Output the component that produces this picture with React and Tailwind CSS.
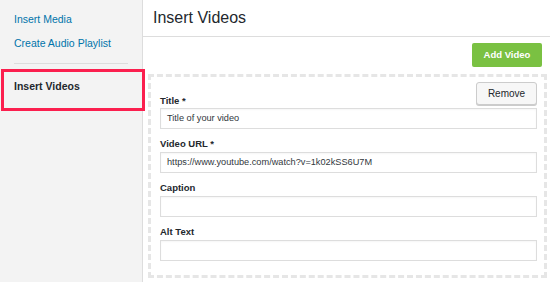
import React from 'react';

const font = { fontFamily: '"Liberation Sans", Arial, sans-serif' };

const Field = ({ label, value, first }) => (
  <div>
    {!first && (
      <label className="block mt-[8px] text-[9.5px] leading-[14px] font-bold text-[#23282d]">
        {label}
      </label>
    )}
    <div
      className={`${first ? '' : 'mt-[1px]'} h-[21px] border border-[#dddddd] bg-white shadow-[inset_0_1px_2px_rgba(0,0,0,0.04)] px-[6px] flex items-center text-[9.2px] text-[#32373c]`}
    >
      {value}
    </div>
  </div>
);

export default function App() {
  return (
    <div className="relative flex w-[550px] h-[282px] overflow-hidden bg-white" style={font}>
      {/* sidebar */}
      <aside className="w-[143px] shrink-0 bg-[#f3f3f3] border-r border-[#dddddd] pt-[9px] px-[14px]">
        <a className="block text-[10.5px] leading-[20px] text-[#0073aa]">Insert Media</a>
        <a className="block mt-[4px] text-[10.5px] leading-[20px] text-[#0073aa]">Create Audio Playlist</a>
        <div className="mt-[10px] border-t border-[#dddddd] w-[114px]" />
        <div className="mt-[12px] text-[10.5px] leading-[20px] font-bold text-[#23282d]">Insert Videos</div>
      </aside>

      {/* highlight box */}
      <div className="absolute left-[1px] top-[69px] w-[144px] h-[42px] border-[3px] border-[#fb1f4e]" />

      {/* main */}
      <main className="flex-1 flex flex-col">
        <header className="h-[37px] border-b border-[#dddddd] pl-[10px] flex items-center">
          <h1 className="text-[16px] text-[#23282d] leading-none">Insert Videos</h1>
        </header>

        <div className="pt-[6px] pr-[8px] flex justify-end">
          <button className="h-[24px] w-[70px] rounded-[2px] bg-[#7ac142] text-white text-[9.5px] font-bold">
            Add Video
          </button>
        </div>

        <div className="mt-[7px] ml-[5px] mr-[3px] h-[204px] border-[3px] border-dashed border-[#e6e6e6] pl-[9px] pr-[7px] pt-[5px]">
          <div className="flex justify-between items-start h-[26px]">
            <span className="self-end text-[9.5px] leading-[14px] font-bold text-[#23282d]">Title *</span>
            <button className="h-[23px] w-[61px] rounded-[3px] border border-[#cccccc] bg-[#f7f7f7] shadow-[0_1px_0_#cccccc] text-[10px] text-[#23282d]">
              Remove
            </button>
          </div>
          <Field first value="Title of your video" />
          <Field label="Video URL *" value="https://www.youtube.com/watch?v=1k02kSS6U7M" />
          <Field label="Caption" value="" />
          <Field label="Alt Text" value="" />
        </div>
      </main>
    </div>
  );
}
